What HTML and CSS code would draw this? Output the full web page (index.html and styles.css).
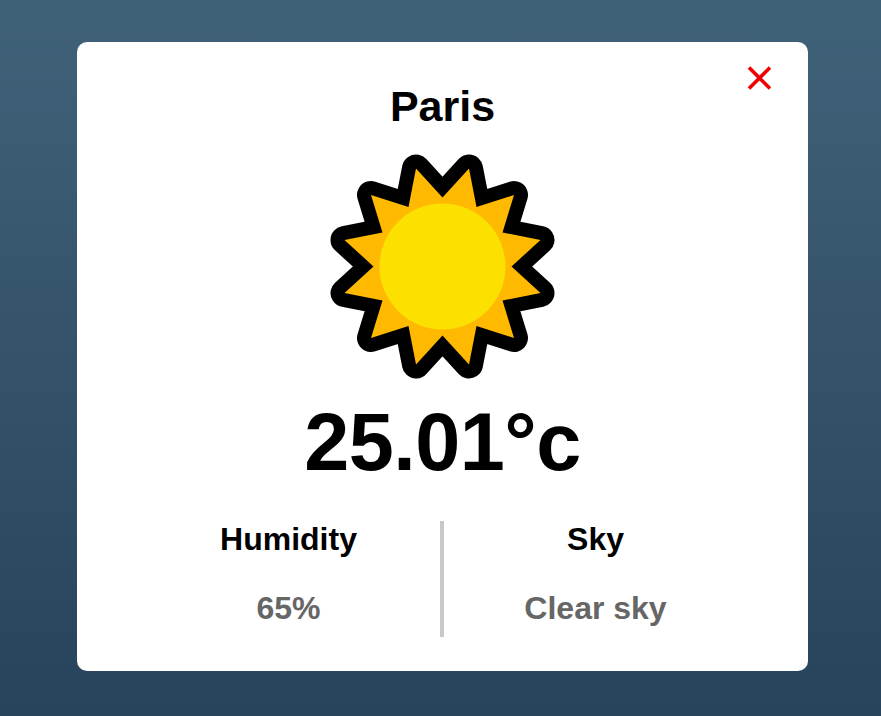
FILE: index.html
```html
<!DOCTYPE html>
<html lang="en">
<head>
<meta charset="utf-8">
<title>Weather</title>
<link rel="stylesheet" href="styles.css">
</head>
<body>
<main class="card">
  <button class="close" aria-label="Close">
    <svg width="24" height="24" viewBox="0 0 24 24"><path d="M2 1.5L23 22.5M23 1.5L2 22.5"/></svg>
  </button>
  <h1 class="city">Paris</h1>
  <svg class="sun" viewBox="-112.5 -112.5 225 225">
    <polygon class="rays" points="0,-69 26.5,-98 34,-59.5 71.5,-71.5 60,-34 98,-26.5 69,0 98,26.5 60,34 71.5,71.5 34,59.5 26.5,98 0,69 -26.5,98 -34,59.5 -71.5,71.5 -60,34 -98,26.5 -69,0 -98,-26.5 -60,-34 -71.5,-71.5 -34,-59.5 -26.5,-98"/>
    <circle class="disc" r="63"/>
  </svg>
  <p class="temperature">25.01°c</p>
  <div class="details">
    <section class="detail">
      <h2 class="label">Humidity</h2>
      <p class="value">65%</p>
    </section>
    <section class="detail">
      <h2 class="label">Sky</h2>
      <p class="value">Clear sky</p>
    </section>
  </div>
</main>
</body>
</html>
```
FILE: styles.css
```css
* { box-sizing: border-box; margin: 0; padding: 0; }

body {
  min-height: 100vh;
  padding: 42px 73px 45px 77px;
  font-family: "Liberation Sans", Arial, sans-serif;
  font-weight: bold;
  color: #000;
  background: linear-gradient(#406279, #28435c);
}

.card {
  position: relative;
  display: flex;
  flex-direction: column;
  align-items: center;
  height: 629px;
  padding: 40px 59px 34px;
  background: #fff;
  border-radius: 10px;
}

.close {
  position: absolute;
  top: 24px;
  right: 37px;
  width: 24px;
  height: 24px;
  border: 0;
  background: none;
}

.close svg { display: block; }
.close path { stroke: #f00000; stroke-width: 3.6; fill: none; }

.city { font-size: 43px; line-height: 48px; }

.sun { width: 225px; height: 225px; margin-top: 24px; }

.rays {
  fill: #ffb900;
  stroke: #000;
  stroke-width: 28;
  stroke-linejoin: round;
  paint-order: stroke;
}

.disc { fill: #fce100; }

.temperature {
  margin-top: 17px;
  font-size: 81px;
  line-height: 92px;
  letter-spacing: -0.5px;
}

.details {
  display: grid;
  grid-template-columns: 308px 1fr;
  width: 100%;
  height: 116px;
  margin-top: 33px;
}

.detail { text-align: center; font-size: 32px; line-height: 37px; }
.detail:first-child { border-right: 4px solid #c8c8c8; padding-left: 1px; }
.detail:last-child { padding-right: 2px; }

.label { font-size: 32px; }
.value { margin-top: 32px; color: #666; }
```
